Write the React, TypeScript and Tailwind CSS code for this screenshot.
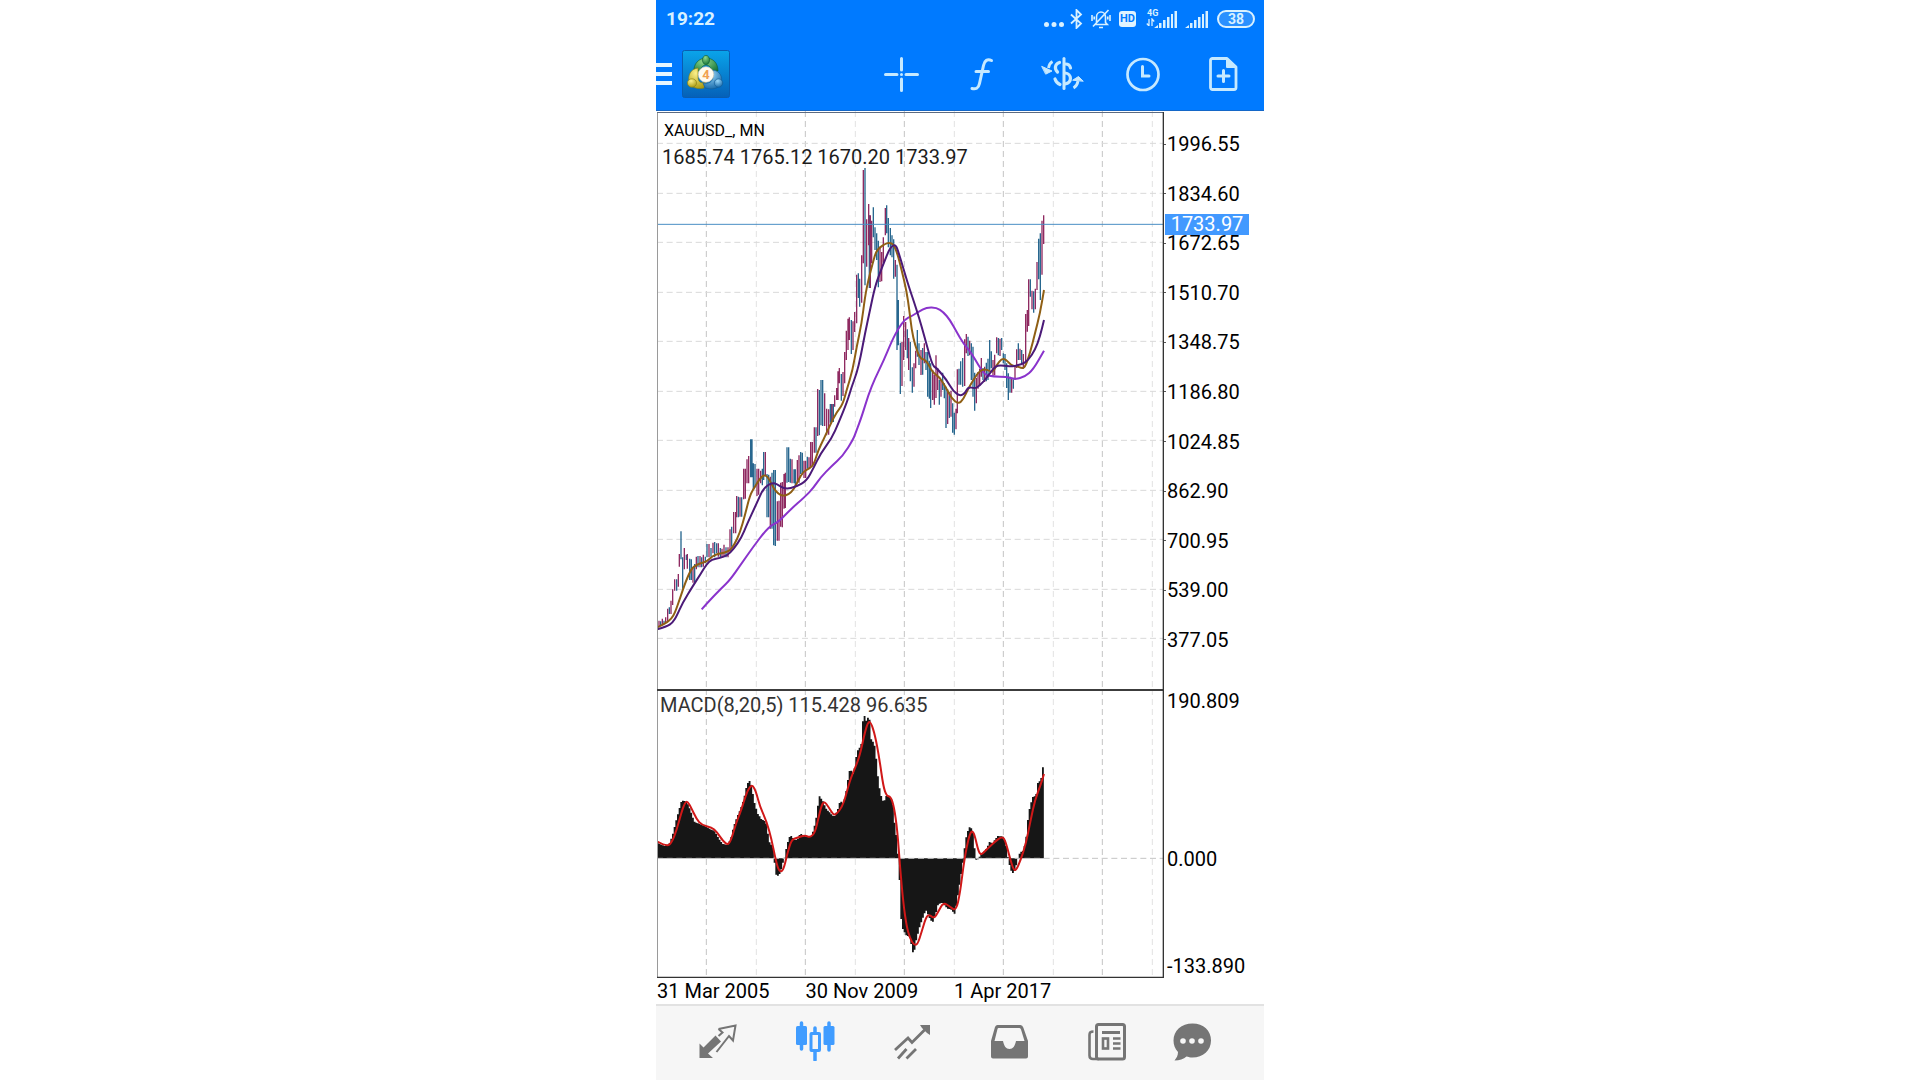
import type { ReactNode } from 'react';

type Bar = [x: number, high: number, low: number];
type Point = [x: number, y: number];

// Plot space is three units per CSS pixel at the default window size.
const PLOT_W = 1521;
const PRICE_TOP = -3;
const PRICE_H = 1734;
const MACD_TOP = 3;
const MACD_H = 867;
const MACD_ZERO = 511;

const gridX = [148, 298, 445, 595, 742, 892, 1039, 1189, 1336, 1486];
const gridY = [94, 244, 391, 541, 688, 838, 985, 1135, 1282, 1432, 1579];

const priceLabels = [
  '1996.55', '1834.60', '1672.65', '1510.70', '1348.75', '1186.80',
  '1024.85', '862.90', '700.95', '539.00', '377.05',
];

const dateLabels = ['31 Mar 2005', '30 Nov 2009', '1 Apr 2017'];

function parse(dx: number, dy: number, text: string): Point[] {
  return text.split(' ').map((pair) => {
    const [x, y] = pair.split(',').map(Number);
    return [x + dx, y + dy];
  });
}

function parseBars(dx: number, dy: number, text: string): Bar[] {
  return text.split(' ').map((item) => {
    const [x, high, low] = item.split(',').map(Number);
    return [x + dx, high + dy, low + dy];
  });
}

// Rounds the corners by running quadratics through the midpoints.
function smooth(points: Point[]) {
  let d = `M${points[0][0]} ${points[0][1]}`;
  for (let i = 1; i < points.length - 1; i++) {
    const [x, y] = points[i];
    const [nx, ny] = points[i + 1];
    d += `Q${x} ${y} ${(x + nx) / 2} ${(y + ny) / 2}`;
  }
  const [lx, ly] = points[points.length - 1];
  return `${d}L${lx} ${ly}`;
}

const barsPath = (bars: Bar[]) => bars.map(([x, h, l]) => `M${x} ${h}V${l}`).join('');

const upBars = [
  ...parseBars(-21, 864, '27,662,678 37,656,676 47,652,668 53,626,664 63,602,642 68,568,615 74,538,572 85,522,560 88,462,500 103,444,508 112,462,506 129,505,548 139,470,508 150,468,502 160,464,500 177,432,472 189,428,460 205,430,470 216,446,472 222,434,468 234,442,472 240,388,455 251,336,400 257,336,400 260,288,352 270,292,350 281,206,298 286,206,296 291,178,250 296,168,250 321,206,288 326,206,284 332,212,250 346,156,226 361,230,386 382,304,422 387,302,422 392,248,380 397,246,382 402,222,326 406,218,324 426,178,250 442,180,250 447,166,248 462,182,234 467,182,234 477,172,206 482,126,200 487,126,196 493,82,158 503,-33,108 524,-20,78 530,26,106 536,28,104 546,12,66'),
  ...parseBars(519, 114, '14,736,770 20,714,750 24,664,750 28,654,700 39,666,738 44,606,700 49,542,630 54,506,600 58,502,570 69,514,600 74,486,546 80,374,520 95,316,458 100,60,340 110,208,350 116,162,286 121,196,414 125,212,340 150,290,396 155,306,394 160,262,338 166,174,256 196,330,380 216,576,708 221,498,630 227,516,600 236,564,660 252,640,710 257,602,655 273,600,675 283,580,640 308,660,750 313,674,764 318,616,744 323,654,720 333,690,740 353,718,822 363,722,800 378,776,838 382,658,790 404,568,708 409,552,610 419,572,616 439,684,760 444,666,716 449,656,708 454,624,680 464,650,696 489,630,680 494,614,676 500,562,610 510,566,618 545,684,728 555,648,690 560,598,654 570,596,630 580,612,656 587,492,640 592,480,545 596,388,528 606,422,478 616,416,478 621,336,420 636,212,374 641,196,282'),
];

const downBars = [
  ...parseBars(-21, 864, '22,654,680 32,664,678 42,662,672 58,622,642 80,538,572 93,394,478 98,472,566 109,464,480 119,476,540 124,478,540 134,492,546 144,468,502 155,472,502 166,470,490 171,432,472 183,444,470 194,426,472 200,430,460 211,444,474 228,442,472 245,380,440 265,290,352 275,292,350 302,118,232 306,118,232 310,190,270 315,192,262 337,206,256 341,156,240 351,222,352 356,224,352 366,218,386 371,210,436 376,210,438 411,142,248 416,142,246 421,176,248 432,208,250 436,208,260 452,156,222 457,158,224 472,170,206 498,82,158 508,-30,106 513,-60,76 518,-60,78 541,12,68'),
  ...parseBars(519, 114, '5,762,816 10,762,816 34,672,752 64,510,612 85,370,444 89,386,470 105,54,406 118,196,414 130,172,262 135,232,300 140,250,330 145,272,412 170,166,250 175,204,292 181,234,316 186,256,322 191,268,386 201,344,600 205,450,586 211,578,732 232,538,625 241,576,694 247,652,728 262,540,620 267,580,645 278,594,674 288,606,660 293,606,740 298,632,746 302,640,774 328,690,764 338,668,720 343,700,745 348,710,834 358,726,804 368,760,848 373,788,854 387,656,704 392,634,704 398,624,710 414,560,618 424,580,690 429,590,740 434,668,782 459,654,690 469,638,694 474,626,690 479,570,660 484,604,655 505,564,616 515,564,600 520,610,640 525,612,660 530,640,714 535,670,750 540,680,728 550,688,716 565,580,630 575,600,640 601,388,440 611,424,488 626,266,388 631,250,450'),
];

const fastAverage = [
  ...parse(-21, 864, '22,682 48,670 65,655 75,638 90,595 105,550 120,515 130,500 150,490 170,485 192,464 236,456 252,436 270,398 285,345 300,285 315,260 328,238 342,224 355,232 370,264 385,282 400,288 415,284 432,268 445,240 460,214 480,205 492,192 505,150 520,120 540,76 560,36 578,14'),
  ...parse(-21, -6, '590,840 608,780 620,710 635,640 645,560 655,510 668,460 678,425 690,412 705,402 715,398 730,402 742,430 755,480 770,545 778,600 785,660 795,705 810,746 828,750 848,788'),
  ...parse(519, 114, '327,680 345,708 365,745 385,762 400,748 415,715 430,690 450,660 470,658 488,668 500,645 515,626 528,628 545,648 560,648 575,655 585,652 600,610 615,550 630,490 642,420'),
];

const middleAverage = [
  ...parse(-21, 864, '22,688 50,680 68,668 80,648 98,608 130,556 150,525 170,492 185,478 210,474 232,466 250,448 275,412 290,375 320,310 340,265 365,248 380,252 405,268 440,260 470,242 490,205 512,160 545,115 565,70 592,4'),
  ...parse(-21, -6, '605,830 620,790 632,740 645,670 660,600 675,530 690,488 705,450 715,425 725,408 737,404 745,425 760,475 775,525 800,600 815,650 830,705 848,768'),
  ...parse(519, 114, '320,654 350,690 370,724 390,738 405,730 415,710 435,716 450,706 470,684 490,655 505,645 540,650 575,644 595,630 615,600 630,560 642,510'),
];

const slowAverage = [
  ...parse(-21, 864, '155,628 180,600 215,564 240,540 275,490 310,440 345,394 365,375 385,366 420,330 465,290 490,264 512,232 545,198 578,168 610,118'),
  ...parse(519, 114, '80,840 95,800 115,735 135,685 160,634 185,574 205,535 225,508 245,498 265,486 290,472 320,473 340,486 360,510 380,546 400,580 425,610 445,645 465,675 490,680 530,680 555,688 585,680 610,658 642,602'),
];

const macdOutline = [
  ...parse(-21, -24, '21,490 40,498 55,492 65,465 75,425 83,395 92,362 105,363 112,375 120,395 130,425 145,432 160,438 175,445 192,455 205,478 215,492 230,495 240,475 248,440 258,412 268,390 278,360 288,315 295,300 302,318 310,365 320,400 332,418 345,425 355,485 368,505 370,535 373,575 378,590 388,580 398,540 402,530 408,495 418,465 432,480 440,478 448,460 465,470 480,470 488,450 495,420 505,348 515,362 525,385 540,402 550,410 560,390 568,362 578,372 585,340 590,305 598,262 605,285 612,262 618,215 625,205 632,190 637,108 642,108 645,125 650,112 657,120 661,178 670,190 675,225 683,310 690,345 698,368 706,348 715,350 725,362 730,420 738,480 742,535 746,600 750,710 755,745 765,765 778,772 785,818 790,815 795,785 805,745 815,715 825,690 835,712 845,728 855,700 862,672 875,668 888,685 900,688 912,702 922,640 932,575 938,535 942,495 948,460 957,440 965,450 970,490 973,535'),
  ...parse(729, -24, '224,535 228,542 233,536 240,522 248,516 258,505 265,486 275,490 290,468 308,470 318,505 322,540 330,570 338,582 345,560 352,530 358,516 368,512 375,480 383,400 390,370 397,348 405,350 410,310 420,300 425,270 430,230 433,230'),
];

const signalLine = [
  ...parse(-21, -24, '22,485 50,500 65,488 80,450 95,395 105,368 112,364 122,380 140,418 155,435 185,442 200,455 220,485 235,495 245,475 258,430 272,395 290,338 300,320 308,316 318,335 330,380 350,425 365,480 375,530 385,570 395,576 403,560 412,520 425,478 440,474 465,465 480,473 495,458 505,415 515,375 523,364 535,380 550,405 560,402 580,375 600,300 615,265 630,225 645,155 655,125 663,128 675,165 688,235 700,320 710,348 722,350 732,380 742,450 750,560 760,670 770,740 780,775 792,795 803,793 815,755 828,712 838,703 852,716 865,695 880,667 900,680 918,693 930,640 940,560 950,500 960,460 968,452'),
  ...parse(729, -24, '225,470 235,512 243,526 262,506 285,485 305,470 315,478 330,535 340,568 348,572 362,540 378,490 392,420 405,360 420,320 432,282'),
];

function histogramPath() {
  const step = 5;
  let d = '';
  let i = 0;
  for (let x = 0; x < 1160; x += step) {
    while (i < macdOutline.length - 2 && macdOutline[i + 1][0] < x) i++;
    const [x0, y0] = macdOutline[i];
    const [x1, y1] = macdOutline[i + 1];
    const y = Math.round(y0 + ((y1 - y0) * (x - x0)) / (x1 - x0));
    d += `M${x} ${MACD_ZERO}V${y}h${step + 0.5}V${MACD_ZERO}z`;
  }
  return d;
}

function VerticalGrid({ top, height }: { top: number; height: number }) {
  return (
    <>
      {gridX.map((x, i) => (
        <path
          key={x}
          d={`M${x} ${top}v${height}`}
          stroke={i % 2 === 0 ? '#c4c4c4' : '#e2e2e2'}
          strokeWidth="3"
          strokeDasharray="18 12"
        />
      ))}
    </>
  );
}

function PricePlot() {
  return (
    <svg
      className="absolute inset-0 size-full"
      viewBox={`0 ${PRICE_TOP} ${PLOT_W} ${PRICE_H}`}
      preserveAspectRatio="none"
      fill="none"
      aria-hidden="true"
    >
      <VerticalGrid top={PRICE_TOP} height={PRICE_H} />
      {gridY.map((y) => (
        <path key={y} d={`M0 ${y}H${PLOT_W}`} stroke="#d9d9d9" strokeWidth="3" strokeDasharray="18 11" />
      ))}
      <path d={barsPath(downBars)} stroke="#28678f" strokeWidth="4" />
      <path d={barsPath(upBars)} stroke="#8f2a61" strokeWidth="4" />
      <path d={`M0 337H${PLOT_W}`} stroke="#4a8fc4" strokeWidth="3" />
      <g strokeWidth="6" strokeLinejoin="round">
        <path d={smooth(slowAverage)} stroke="#8a33cc" />
        <path d={smooth(fastAverage)} stroke="#8f5f14" />
        <path d={smooth(middleAverage)} stroke="#4b1a78" />
      </g>
      <path d={`M1.5 0v${PRICE_H}`} stroke="#9a9a9a" strokeWidth="3" />
      <path d={`M0 1.5H${PLOT_W}`} stroke="#5c6a80" strokeWidth="3" />
      <path d={`M1519 0v${PRICE_H}`} stroke="#333333" strokeWidth="4" />
    </svg>
  );
}

function MacdPlot() {
  return (
    <svg
      className="absolute inset-0 size-full"
      viewBox={`0 ${MACD_TOP} ${PLOT_W} ${MACD_H}`}
      preserveAspectRatio="none"
      fill="none"
      aria-hidden="true"
    >
      <VerticalGrid top={MACD_TOP} height={MACD_H} />
      <path d={histogramPath()} fill="#161616" />
      <path d={`M0 ${MACD_ZERO}H${PLOT_W}`} stroke="#c4c4c4" strokeWidth="3" strokeDasharray="18 11" />
      <path d={smooth(signalLine)} stroke="#d01818" strokeWidth="6" strokeLinejoin="round" />
      <path d={`M1.5 ${MACD_TOP}v${MACD_H}`} stroke="#9a9a9a" strokeWidth="3" />
      <path d={`M0 6H${PLOT_W}`} stroke="#3c3c3c" strokeWidth="6" />
      <path d={`M0 868H1519V${MACD_TOP}`} stroke="#333333" strokeWidth="4" />
    </svg>
  );
}

function AppLogo() {
  return (
    <svg className="size-12" viewBox="0 0 48 48" role="img" aria-label="MetaTrader 4">
      <defs>
        <linearGradient id="tile" x1="0" y1="0" x2="0" y2="1">
          <stop offset="0" stopColor="#0aa4ea" />
          <stop offset="1" stopColor="#0560b8" />
        </linearGradient>
        <radialGradient id="green" cx=".4" cy=".25" r=".8">
          <stop offset="0" stopColor="#8fd98a" />
          <stop offset="1" stopColor="#117038" />
        </radialGradient>
        <radialGradient id="yellow" cx=".4" cy=".25" r=".8">
          <stop offset="0" stopColor="#fbf08a" />
          <stop offset="1" stopColor="#a99a10" />
        </radialGradient>
        <radialGradient id="blue" cx=".4" cy=".25" r=".8">
          <stop offset="0" stopColor="#9ad8fa" />
          <stop offset="1" stopColor="#1467a8" />
        </radialGradient>
      </defs>
      <rect x=".5" y=".5" width="47" height="47" rx="2" fill="url(#tile)" stroke="#0a5cb0" />
      <path d="M12 22c-1-8 5-14 12-14s12 5 12 13l-6 2c0-5-3-8-6-8s-6 3-6 8z" fill="url(#green)" stroke="#0d5c34" strokeWidth=".6" />
      <path d="M16 18c-8 1-10 8-9 13 1 6 8 9 15 7l2-6c-5 2-8 0-8-5z" fill="url(#yellow)" stroke="#8a7d10" strokeWidth=".6" />
      <path d="M31 20c7 1 10 7 8 13s-9 7-16 5l-2-5c6 1 10-1 10-7z" fill="url(#blue)" stroke="#125a94" strokeWidth=".6" />
      <ellipse cx="24" cy="10" rx="3.6" ry="4.6" fill="url(#green)" stroke="#0d5c34" strokeWidth=".6" />
      <ellipse cx="10" cy="33" rx="4.6" ry="4.2" fill="url(#yellow)" stroke="#8a7d10" strokeWidth=".6" />
      <ellipse cx="36.5" cy="33" rx="4.2" ry="4.2" fill="url(#blue)" stroke="#125a94" strokeWidth=".6" />
      <circle cx="24" cy="24.5" r="7.8" fill="#fffaf0" stroke="#c8c4b4" strokeWidth=".6" />
      <text x="24" y="29" textAnchor="middle" fontSize="13" fontWeight="700" fill="#f0a050">
        4
      </text>
    </svg>
  );
}

function SignalBars() {
  return (
    <svg className="h-[18px] w-[23px]" viewBox="0 0 23 18" fill="currentColor" aria-hidden="true">
      <path d="M0 18l4-3v3zM5 13h2.500v5H5zM9 10h2.500v8H9zM13 7h2.500v11H13zM17 4h2v14h-2zM20.500 1H23v17h-2.500z" />
    </svg>
  );
}

function StatusBar() {
  return (
    <div className="flex h-[38px] items-center justify-between pr-[9px] pl-[10px] text-[#d9f1ff]">
      <time className="text-[19px] leading-6 font-bold">19:22</time>
      <div className="flex items-center">
        <svg className="mr-[6px] h-5 w-5" viewBox="0 0 20 20" fill="currentColor" aria-hidden="true">
          <circle cx="2.5" cy="15.5" r="2.5" />
          <circle cx="10" cy="15.5" r="2.5" />
          <circle cx="17.5" cy="15.5" r="2.5" />
        </svg>
        <svg className="mr-2 h-5 w-[13px]" viewBox="0 0 13 20" fill="none" stroke="currentColor" strokeWidth="1.8" aria-hidden="true">
          <path d="M1 5.500l10 9L6.500 19V1L11 5.500l-10 9" />
        </svg>
        <svg className="mr-2 h-5 w-5" viewBox="0 0 20 20" fill="none" stroke="currentColor" strokeWidth="1.6" aria-hidden="true">
          <path d="M5.500 14V8a4.500 5 0 0 1 9 0v5.500l1.800 2H4M8 18.500h4M17.500 1L2 17.500M1 6v6M19 6v6M3.200 7.500v3M16.800 7.500v3" />
        </svg>
        <span className="mr-[10px] flex h-4 w-[17px] items-center justify-center rounded-[3px] bg-[#e0f3ff] text-[11px] leading-4 font-bold text-[#007aff]">
          HD
        </span>
        <span className="mr-[-8px] flex h-5 w-4 flex-col items-start text-[9px] leading-[9px] font-bold">
          <span className="pl-px">4G</span>
          <svg className="h-2 w-[9px]" viewBox="0 0 9 8" fill="none" stroke="currentColor" strokeWidth="1.3" aria-hidden="true">
            <path d="M3 1v7L.8 5.500M6 8V1l2.200 2.500" />
          </svg>
        </span>
        <SignalBars />
        <span className="w-2" />
        <SignalBars />
        <span className="ml-[9px] flex h-[18px] w-[38px] items-center justify-center rounded-full border-2 border-[#d9f1ff] bg-[#2a90ff] text-[14px] leading-4 font-bold">
          38
        </span>
      </div>
    </div>
  );
}

function IconButton({ label, children }: { label: string; children: ReactNode }) {
  return (
    <button type="button" aria-label={label} className="size-10 shrink-0">
      <svg viewBox="0 0 40 40" className="size-10 overflow-visible" fill="none" stroke="currentColor" strokeLinecap="round" strokeLinejoin="round">
        {children}
      </svg>
    </button>
  );
}

function Toolbar() {
  return (
    <div className="flex h-[72px] items-center text-[#c6e9ff]">
      <button type="button" aria-label="Menu" className="flex w-4 flex-col gap-[5px]">
        <span className="h-1 w-full bg-[#e6f6ff]" />
        <span className="h-1 w-full bg-[#e6f6ff]" />
        <span className="h-1 w-full bg-[#e6f6ff]" />
      </button>
      <span className="ml-[10px]">
        <AppLogo />
      </span>
      <div className="ml-auto flex gap-[41px] pr-5">
        <IconButton label="Crosshair">
          <path d="M5.500 20.500H17M26 20.500h11.500M21.500 4.500V16M21.500 25v11.500" strokeWidth="3" />
          <circle cx="21.5" cy="20.5" r="1.5" fill="currentColor" stroke="none" />
        </IconButton>
        <IconButton label="Indicators">
          <path d="M30.500 6.500c-4-2-7 0-8 5l-4 18c-1 5-4 6-7.500 5M15 17.500H27.500" strokeWidth="3" />
        </IconButton>
        <IconButton label="Symbols">
          <path d="M22 4.500v30" strokeWidth="3" />
          <path d="M17.500 8.500c-4.500 1.500-5.500 6-2 9.500M13 25c1 3 2.500 4.500 5 5.500" strokeWidth="3.2" />
          <path d="M23.500 10c2.500 0 4.500 1.500 5 4M23 19c7 .5 7.500 10 0 11" strokeWidth="3.2" />
          <path d="M10.500 7.500C8 9 7 10.500 6.500 14" strokeWidth="2.8" strokeLinecap="butt" />
          <path d="M0 12.500l10 4.500-6 3z" fill="currentColor" strokeWidth="1" />
          <path d="M31.500 34c2.500-1.500 4-3.500 4.500-7" strokeWidth="2.8" strokeLinecap="butt" />
          <path d="M31 26l5.500-3.500L41 27z" fill="currentColor" strokeWidth="1" />
        </IconButton>
        <IconButton label="Timeframe">
          <circle cx="20" cy="20.5" r="15.5" strokeWidth="2.7" />
          <path d="M19.500 12.500v9.500H26" strokeWidth="3" strokeLinejoin="miter" />
        </IconButton>
        <IconButton label="New order">
          <path d="M8.500 4.500H23l9 8.500v20.500a2 2 0 0 1-2 2H8.500a2 2 0 0 1-2-2v-27a2 2 0 0 1 2-2z" strokeWidth="2.8" />
          <path d="M23 5v8h9z" fill="currentColor" strokeWidth="2" />
          <path d="M14 22h11M19.500 16.500v11" strokeWidth="3" />
        </IconButton>
      </div>
    </div>
  );
}

function NavLink({ label, className, children }: { label: string; className: string; children: ReactNode }) {
  return (
    <a href="#" aria-label={label} className={`flex basis-0 items-center justify-center ${className}`}>
      <svg viewBox="0 0 40 40" className="size-10" fill="none" stroke="currentColor">
        {children}
      </svg>
    </a>
  );
}

function BottomNav() {
  return (
    <nav className="flex h-[76px] border-t-2 border-[#e2e2e2] bg-[#f6f6f6] pr-[35px] pb-1 pl-[13px] text-[#757575]">
      <NavLink label="Quotes" className="grow-4">
        <path d="M1.500 37V22.500l4 4L17.500 14.500l5.500 6-13 12 5 4.500z" fill="currentColor" stroke="none" />
        <path d="M20.500 8l17-3.500-2.500 15-4-4.500L18.500 31M20.500 8l4 3.500-4 3.500" strokeWidth="2" />
      </NavLink>
      <NavLink label="Charts" className="grow-4 text-[#409cff]">
        <path d="M6.500 2v26M34 2v27M20 7v32" strokeWidth="3.5" strokeLinecap="round" />
        <rect x="1" y="5" width="11" height="19" rx="1.5" fill="currentColor" stroke="none" />
        <rect x="28.5" y="5" width="11" height="19" rx="1.5" fill="currentColor" stroke="none" />
        <rect x="16" y="12.5" width="8.5" height="17" rx=".5" fill="#f6f6f6" strokeWidth="3" />
      </NavLink>
      <NavLink label="Trade" className="grow-4">
        <path d="M3 29l13-12 4 4.500L35.500 6M6 37.500l8.500-9.500M14.500 37.500L24 28" strokeWidth="2.8" />
        <path d="M28 4h10v10l-3-2-5-5z" fill="currentColor" stroke="none" />
      </NavLink>
      <NavLink label="History" className="grow-4">
        <path d="M7.500 4h23q2 0 2.800 2.500L38 20v15.500q0 2-2 2H3q-2 0-2-2V20L5 6q.8-2 2.500-2z" fill="currentColor" stroke="none" />
        <path d="M8.500 7h21q1 0 1.500 1.500L34.500 20H26c-1 5-3 8-6.500 8S14 25 13 20H4.500L7.500 8q.3-1 1-1z" fill="#f6f6f6" stroke="none" />
      </NavLink>
      <NavLink label="News" className="grow-4">
        <rect x="9.5" y="3.5" width="28" height="34.5" rx="2" strokeWidth="3" />
        <path d="M6.500 10.500c-3 0-4 1-4 3.500v20.500c0 2.500 1 3.500 3.500 3.500h6" strokeWidth="2.6" />
        <path d="M15 11.500h18" strokeWidth="3" />
        <rect x="16" y="17.5" width="5" height="10" strokeWidth="2.6" />
        <path d="M26 17.500h7.500M26 22.500h7.500M26 27.500h7.500" strokeWidth="2.5" />
      </NavLink>
      <NavLink label="Messages" className="grow-3">
        <path d="M20.500 2.500c11 0 18.500 7 18.500 17s-8 17-18.500 17c-2.500 0-4-.5-6-1-3 2.500-7 4-12 4 2-2.500 3.500-5 3.500-8.500-3-3-4.500-7-4.500-11.500 0-10 8-17 19-17z" fill="currentColor" stroke="none" />
        <g fill="#f6f6f6" stroke="none">
          <circle cx="11" cy="20" r="2.8" />
          <circle cx="20" cy="20" r="2.8" />
          <circle cx="29" cy="20" r="2.8" />
        </g>
      </NavLink>
    </nav>
  );
}

export default function App() {
  return (
    <div className="min-h-screen bg-white">
      <div className="mx-auto flex min-h-screen w-full max-w-[608px] flex-col font-[Roboto,'Liberation_Sans',sans-serif] text-black">
        <header className="border-b border-[#1467c8] bg-[#007aff]">
          <StatusBar />
          <Toolbar />
        </header>

        <main className="flex grow flex-col pl-px text-[20px] leading-6">
          <section className="flex grow-2 basis-0" aria-label="Price chart">
            <div className="relative flex-1">
              <PricePlot />
              <div className="relative pt-[10px] pl-[5px]">
                <h1 className="pl-[2px] text-[16px] leading-5">XAUUSD_, MN</h1>
                <p className="mt-1 text-[#1c1c1c]">1685.74 1765.12 1670.20 1733.97</p>
              </div>
            </div>
            <div className="relative flex w-[100px] flex-col justify-between pt-[25px] pb-[41px] leading-4">
              {priceLabels.map((label) => (
                <span key={label} className="flex items-center gap-px">
                  <span className="h-px w-[2px] bg-[#555555]" />
                  {label}
                </span>
              ))}
              <span className="absolute top-[103px] left-px w-[84px] bg-[#4299ff] text-center leading-[21px] text-white">
                1733.97
              </span>
            </div>
          </section>

          <section className="flex grow basis-0" aria-label="MACD indicator">
            <div className="relative flex-1">
              <MacdPlot />
              <h2 className="relative pt-1 pl-[3px] text-[#333333]">MACD(8,20,5) 115.428 96.635</h2>
            </div>
            <div className="flex w-[100px] flex-col pl-[3px]">
              <span>190.809</span>
              <span className="grow-8" />
              <span>0.000</span>
              <span className="grow-5" />
              <span>-133.890</span>
            </div>
          </section>

          <div className="mr-[100px] flex h-[26px] items-center">
            {dateLabels.map((label) => (
              <span key={label} className="basis-[29.3%] whitespace-nowrap">
                {label}
              </span>
            ))}
          </div>
        </main>

        <BottomNav />
      </div>
    </div>
  );
}
